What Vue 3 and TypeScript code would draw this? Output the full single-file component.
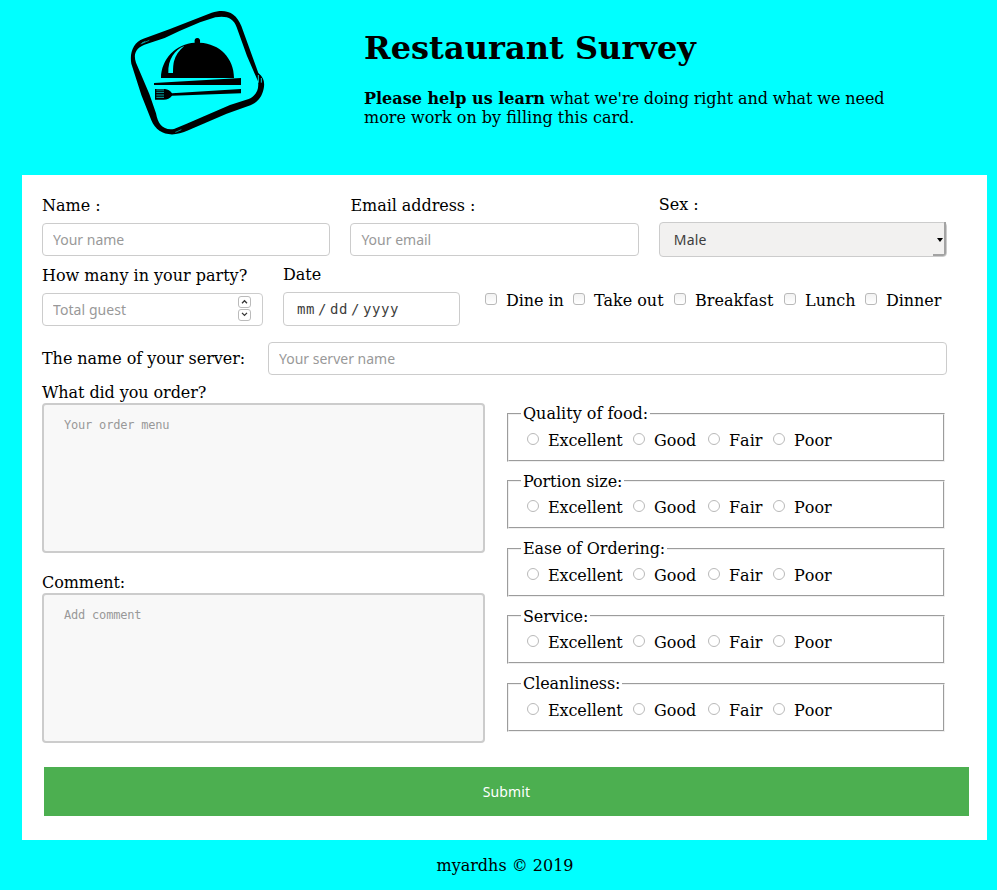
<script setup lang="ts">
import { ref } from 'vue'

const meals: string[] = ['Dine in', 'Take out', 'Breakfast', 'Lunch', 'Dinner']
const ratings: string[] = ['Excellent', 'Good', 'Fair', 'Poor']
const questions: string[] = ['Quality of food:', 'Portion size:', 'Ease of Ordering:', 'Service:', 'Cleanliness:']
const guests = ref<string>('')

function step(delta: number): void {
  guests.value = String(Math.max(0, Number(guests.value || 0) + delta))
}
</script>

<template>
  <div class="page">
    <header class="header">
      <svg class="logo" viewBox="0 0 480 435" aria-hidden="true">
        <path fill-rule="evenodd" d="M70 116 L150 87 L275 38 C318 25 348 38 364 78 L415 219 C431 232 435 246 431 266 C425 294 410 309 385 318 L320 341 L205 391 C154 415 111 403 94 361 L64 285 L34 191 C28 157 41 126 70 116Z M82 131 C50 141 38 159 48 188 L66 230 L88 282 L108 340 C114 374 130 392 162 387 L200 371 L330 315 L386 297 C407 288 418 269 414 244 L381 168 L350 82 C341 53 317 46 286 52 L240 67 L180 92 L134 114Z" />
        <path d="M62 132 L88 121 M66 129 L76 124 M166 397 L184 389" fill="none" stroke="#00ffff" stroke-width="1.6" />
        <path d="M415 225 V248 M424 234 V248" fill="none" stroke="#00ffff" stroke-width="2.5" />
        <path d="M123 234 C123 177 169 130 224 128 Q222 114 232 114 Q242 114 240 128 C299 131 342 174 342 234Z" />
        <path d="M145 219 C143 179 165 148 193 138 Q169 157 162 184 Q159 195 159 219Z" fill="#00ffff" />
        <path d="M102 249 L363 234 V255 H102Z M105 267 H135 Q148 268 156 280 L363 267 V280 L156 287 Q147 299 131 299 H105Z" />
        <path d="M109 270 H132 M109 277 H132 M109 285 H132 M109 292 H132" stroke="#00ffff" stroke-width="2" />
      </svg>
      <div class="intro">
        <h1>Restaurant Survey</h1>
        <p><b>Please help us learn</b> <span class="lead">what we're doing right and what we need</span><br>more work on by filling this card.</p>
      </div>
    </header>

    <form class="card" @submit.prevent>
      <div class="row contact">
        <label class="field"><span>Name :</span><input type="text" placeholder="Your name"></label>
        <label class="field email"><span>Email address :</span><input type="text" placeholder="Your email"></label>
        <label class="field sex"><span>Sex :</span>
          <span class="select-wrap">
            <select><option>Male</option><option>Female</option></select>
            <svg class="caret" viewBox="0 0 6 4"><path d="M0 0H6L3 4Z" /></svg>
          </span>
        </label>
      </div>

      <div class="row visit">
        <label class="field party"><span>How many in your party?</span>
          <span class="number">
            <input v-model="guests" type="text" placeholder="Total guest">
            <span class="spin">
              <button type="button" @click="step(1)"><svg viewBox="0 0 13 12"><path d="M3.5 7.5L6.5 4.5L9.5 7.5" /></svg></button>
              <button type="button" @click="step(-1)"><svg viewBox="0 0 13 12"><path d="M3.5 3.5L6.5 6.5L9.5 3.5" /></svg></button>
            </span>
          </span>
        </label>
        <div class="field date"><span>Date</span><div class="datebox"><i>mm</i><i>/</i><i>dd</i><i>/</i><i>yyyy</i></div></div>
        <div class="meals">
          <label v-for="m in meals" :key="m"><input type="checkbox"><span>{{ m }}</span></label>
        </div>
      </div>

      <label class="server"><span>The name of your server:</span><input type="text" placeholder="Your server name"></label>

      <div class="row lower">
        <div class="notes">
          <label><span>What did you order?</span><textarea placeholder="Your order menu"></textarea></label>
          <label><span>Comment:</span><textarea placeholder="Add comment"></textarea></label>
        </div>
        <div class="scores">
          <fieldset v-for="q in questions" :key="q">
            <legend>{{ q }}</legend>
            <div class="options">
              <label v-for="r in ratings" :key="r"><input type="radio" :name="q"><span>{{ r }}</span></label>
            </div>
          </fieldset>
        </div>
      </div>

      <button class="submit" type="submit">Submit</button>
    </form>

    <footer>myardhs © 2019</footer>
  </div>
</template>

<style>
body { background: #00ffff; }
</style>

<style scoped>
* { box-sizing: border-box; }
.page {
  width: 997px;
  height: 890px;
  overflow: hidden;
  background: #00ffff;
  color: #000;
  font: 16px/19px "DejaVu Serif", serif;
}
.header { display: flex; height: 175px; padding-left: 120px; }
.logo { width: 160px; height: 145px; margin-right: 84px; flex: none; }
.intro { padding-top: 29px; white-space: nowrap; }
h1 { margin: 0; font-size: 32px; line-height: 38px; letter-spacing: 0.04px; }
p { margin: 22px 0 0; }
.lead { letter-spacing: -0.1px; }
.card { width: 965px; height: 665px; margin-left: 22px; padding: 20px 0 0 20px; background: #fff; }
.row { display: flex; }
.field { display: flex; flex-direction: column; }
.field > span:first-child { height: 28px; padding-top: 1px; white-space: nowrap; }
.email > span:first-child { letter-spacing: -0.05px; }
input[type="text"], select, .datebox {
  display: block;
  width: 100%;
  height: 33px;
  padding: 0 10px;
  border: 1px solid #ccc;
  border-radius: 4px;
  background: #fff;
  color: #3d3d3d;
  font: 14px/20px "Noto Sans", sans-serif;
  outline: none;
}
input::placeholder, textarea::placeholder { color: #999; opacity: 1; }
.contact { gap: 20px; height: 70px; }
.contact .field { width: 288.4px; }
.sex > span:first-child { height: 27px; padding-top: 0; }
.select-wrap { position: relative; display: block; width: 288px; }
select { appearance: none; height: 35px; padding-left: 14px; background: #f2f1f0; letter-spacing: 0.2px; }
.caret { position: absolute; right: 4px; top: 16px; width: 6px; height: 4px; }
.select-wrap::after {
  content: "";
  position: absolute;
  right: 1px;
  bottom: 1px;
  width: 11px;
  height: 32px;
  border: solid #a3a3a3;
  border-width: 0 2px 2px 0;
  border-radius: 0 0 3px 0;
}
.visit { height: 77px; }
.party { width: 221px; margin-right: 20px; }
.party input { letter-spacing: 0.08px; }
.number { position: relative; }
.spin { position: absolute; right: 12px; top: 3px; display: flex; flex-direction: column; gap: 1px; }
.spin button { width: 13px; height: 12px; padding: 0; border: 1px solid #bbb; border-radius: 3px; background: #fff; display: flex; }
.spin svg { width: 11px; height: 10px; fill: none; stroke: #333; stroke-width: 1.5; }
.date { width: 177px; margin-right: 25px; }
.date > span:first-child { height: 27px; padding-top: 0; }
.datebox { display: grid; grid-template-columns: 21px 12px 21px 12px auto; justify-content: start; align-items: center; height: 34px; padding-left: 13px; font: 14px/20px "DejaVu Sans Mono", monospace; }
.datebox i { font-style: normal; letter-spacing: 0.6px; }
.meals { display: grid; grid-template-columns: 88px 101px 110px 81px 78px; padding-top: 26px; }
.meals label, .options label { display: flex; white-space: nowrap; }
.meals label:nth-child(odd) span { letter-spacing: -0.05px; }
.meals label:nth-child(3) span { letter-spacing: 0.04px; }
.meals input, .options input {
  appearance: none;
  width: 12px;
  height: 12px;
  margin: 2px 9px 0 0;
  border: 1px solid #b9b9b9;
  border-radius: 3px;
  background: linear-gradient(#f2f2f2, #fff);
  flex: none;
}
.options input { border-radius: 50%; background: #fff; }
.server { display: flex; align-items: center; height: 33px; white-space: nowrap; }
.server span { width: 226px; letter-spacing: -0.05px; }
.server input[type="text"] { width: 679px; }
.lower { height: 372px; }
.notes { width: 443px; padding-top: 8px; margin-right: 22px; }
.notes label { display: flex; flex-direction: column; height: 190px; }
.notes span { height: 20px; letter-spacing: -0.08px; }
textarea {
  width: 443px;
  height: 150px;
  margin: 0;
  padding: 12px 20px;
  border: 2px solid #ccc;
  border-radius: 4px;
  background: #f8f8f8;
  resize: none;
  font: 12px/16px "DejaVu Sans Mono", monospace;
  letter-spacing: -0.2px;
}
.scores { width: 438px; padding-top: 29px; }
fieldset {
  height: 57.5px;
  margin: 0 0 10px;
  padding: 7.6px 12px 0;
  border: 2px groove #f0f0f0;
}
legend { height: 19px; padding: 0 2px; }
fieldset + fieldset legend { letter-spacing: -0.1px; }
.options { display: grid; grid-template-columns: 106px 75px 65px 70px; padding-left: 6px; }
.options label:nth-child(n + 3) span { font-kerning: none; }
.options label:first-child span { letter-spacing: -0.1px; }
.submit {
  display: block;
  width: 925px;
  height: 49px;
  margin: 20px 0 0 2px;
  border: 0;
  background: #4caf50;
  color: #fff;
  font: 14px/20px "Noto Sans", sans-serif;
  letter-spacing: 0.15px;
}
footer { padding: 16px 0 0 13px; text-align: center; }
</style>
